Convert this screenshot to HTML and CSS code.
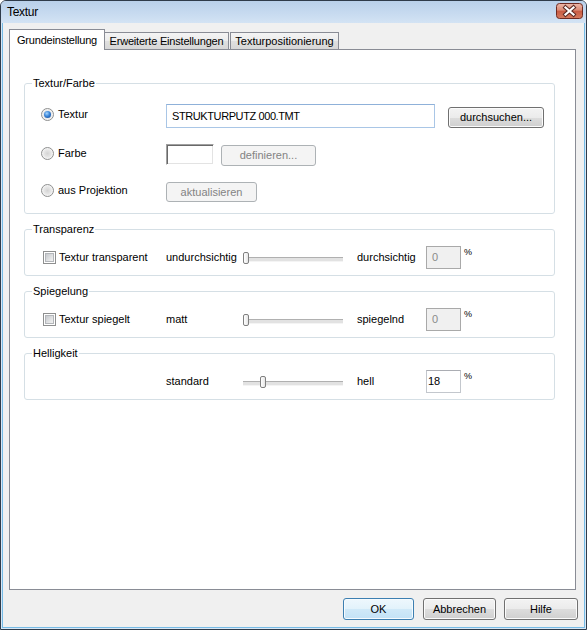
FILE: index.html
```html
<!DOCTYPE html>
<html lang="de">
<head>
<meta charset="utf-8">
<title>Textur</title>
<link rel="stylesheet" href="styles.css">
</head>
<body>
<div class="window">
  <div class="titlebar">
    <span class="title">Textur</span>
    <svg class="close" width="27" height="16" viewBox="0 0 27 16">
      <defs>
        <linearGradient id="cg" x1="0" y1="0" x2="0" y2="1">
          <stop offset="0" stop-color="#edb9ab"/>
          <stop offset="0.45" stop-color="#db8a74"/>
          <stop offset="0.5" stop-color="#c85a42"/>
          <stop offset="1" stop-color="#d67c60"/>
        </linearGradient>
      </defs>
      <rect x="0.5" y="0.5" width="26" height="15" rx="3" fill="url(#cg)" stroke="#6e2a22"/>
      <path d="M9.5 4.5 L17.5 11.5 M17.5 4.5 L9.5 11.5" stroke="#5b2a24" stroke-width="4.2" stroke-linecap="square"/>
      <path d="M9.5 4.5 L17.5 11.5 M17.5 4.5 L9.5 11.5" stroke="#ffffff" stroke-width="2.2" stroke-linecap="square"/>
    </svg>
  </div>
  <div class="client">
    <div class="tabs">
      <div class="tab active t1">Grundeinstellung</div>
      <div class="tab t2">Erweiterte Einstellungen</div>
      <div class="tab t3">Texturpositionierung</div>
    </div>
    <div class="panel">
      <fieldset class="group g1">
        <legend>Textur/Farbe</legend>
        <div class="gbody">
          <div class="row r1">
            <span class="opt"><span class="radio checked"></span>Textur</span>
            <div class="textbox">STRUKTURPUTZ 000.TMT</div>
            <div class="btn browse">durchsuchen...</div>
          </div>
          <div class="row r2">
            <span class="opt"><span class="radio"></span>Farbe</span>
            <div class="colorbox"></div>
            <div class="btn disabled define">definieren...</div>
          </div>
          <div class="row r3">
            <span class="opt"><span class="radio"></span>aus Projektion</span>
            <div class="btn disabled refresh">aktualisieren</div>
          </div>
        </div>
      </fieldset>

      <fieldset class="group">
        <legend>Transparenz</legend>
        <div class="gbody">
          <div class="srow">
            <span class="opt"><span class="check"></span>Textur transparent</span>
            <span>undurchsichtig</span>
            <div class="slider"><span class="thumb" style="margin-left:0px"></span></div>
            <span>durchsichtig</span>
            <div class="numwrap"><div class="num disabled">0</div><span class="pct">%</span></div>
          </div>
        </div>
      </fieldset>

      <fieldset class="group">
        <legend>Spiegelung</legend>
        <div class="gbody">
          <div class="srow">
            <span class="opt"><span class="check"></span>Textur spiegelt</span>
            <span>matt</span>
            <div class="slider"><span class="thumb" style="margin-left:0px"></span></div>
            <span>spiegelnd</span>
            <div class="numwrap"><div class="num disabled">0</div><span class="pct">%</span></div>
          </div>
        </div>
      </fieldset>

      <fieldset class="group">
        <legend>Helligkeit</legend>
        <div class="gbody">
          <div class="srow">
            <span class="opt"></span>
            <span>standard</span>
            <div class="slider"><span class="thumb" style="margin-left:17px"></span></div>
            <span>hell</span>
            <div class="numwrap"><div class="num">18</div><span class="pct">%</span></div>
          </div>
        </div>
      </fieldset>
    </div>
    <div class="footer">
      <div class="btn default ok">OK</div>
      <div class="btn cancel">Abbrechen</div>
      <div class="btn help">Hilfe</div>
    </div>
  </div>
</div>
</body>
</html>
```

FILE: styles.css
```css
* { box-sizing: border-box; }

body {
  margin: 0;
  font: 11px/13px "Liberation Sans", Arial, sans-serif;
  color: #000;
  background: #fff;
}

.window {
  width: 587px;
  height: 630px;
  border: 1px solid #2f3b4a;
  border-radius: 6px 6px 0 0;
  background: #d6e7f6;
  display: flex;
  flex-direction: column;
  overflow: hidden;
}

.titlebar {
  height: 22px;
  flex: none;
  display: flex;
  align-items: flex-start;
  justify-content: space-between;
  padding: 0 3px 0 6px;
  background: linear-gradient(#b9d0ea, #c8dbf0 60%, #d3e3f4);
}

.title {
  font-size: 12px;
  line-height: 22px;
  letter-spacing: -0.3px;
}

.close {
  display: block;
  margin-top: 2px;
}

.client {
  flex: 1;
  margin: 0 1px 1px;
  border: 1px solid #76bbe6;
  border-top: none;
  background: #f0f0f0;
  padding: 6px 6px 7px 6px;
  display: flex;
  flex-direction: column;
}

/* tabs */
.tabs {
  display: flex;
  align-items: flex-end;
  height: 20px;
  flex: none;
  position: relative;
  z-index: 1;
}

.tab {
  height: 17px;
  border: 1px solid #898c95;
  border-bottom: none;
  background: linear-gradient(#f4f4f4, #ececec 50%, #e0e0e0 50%, #d7d7d7);
  display: flex;
  align-items: center;
  justify-content: center;
  padding-top: 1px;
  white-space: nowrap;
}

.tab.active {
  height: 21px;
  margin-bottom: -1px;
  background: #fff;
  padding-top: 0;
  letter-spacing: -0.2px;
}

.t1 { width: 96px; }
.t2 { width: 125px; margin-left: -1px; letter-spacing: -0.2px; }
.t3 { width: 109px; margin-left: 1px; }

/* panel */
.panel {
  flex: 1;
  border: 1px solid #898c95;
  background: #fff;
  margin-right: 2px;
  padding: 27px 20px 0 14px;
  display: flex;
  flex-direction: column;
  gap: 9px;
}

.group {
  margin: 0;
  padding: 0;
  min-width: 0;
  border: 1px solid #d5dfe5;
  border-radius: 3px;
}

.group legend {
  margin-left: 7px;
  padding: 0 1px;
  line-height: 13px;
}

.gbody {
  padding: 10px 0 6px 18px;
}

.g1 .gbody {
  padding: 14px 0 11px 18px;
}

.row {
  display: flex;
  align-items: center;
}

.row + .row { margin-top: 16px; }
.r1 { height: 24px; }
.r2 { height: 22px; }
.r3 { height: 20px; }

.opt {
  width: 123px;
  flex: none;
  display: flex;
  align-items: center;
  white-space: nowrap;
}

.r1 .opt { align-self: flex-start; margin-top: 4px; }
.r2 .opt { align-self: flex-start; margin-top: 3px; }
.r3 .opt { align-self: flex-start; margin-top: 2px; }

.radio {
  width: 13px;
  height: 13px;
  margin-left: -2px;
  margin-right: 4px;
  border-radius: 50%;
  border: 1px solid #8e8f8f;
  background: radial-gradient(circle at 50% 50%, #d4d4d4 0, #e6e6e6 45%, #f8f8f8 75%, #fff 100%);
  display: flex;
  align-items: center;
  justify-content: center;
  flex: none;
}

.radio.checked::after {
  content: "";
  width: 7px;
  height: 7px;
  border-radius: 50%;
  background: radial-gradient(circle at 40% 35%, #a6d6ff 0, #3b86d8 45%, #12418f 100%);
}

.check {
  width: 13px;
  height: 13px;
  margin-right: 3px;
  border: 1px solid #8e8f8f;
  background: #fff;
  padding: 1px;
  flex: none;
  display: flex;
}

.check::after {
  content: "";
  flex: 1;
  border: 1px solid #b3b6ba;
  background: linear-gradient(135deg, #c6c9cd, #e6e7e8 70%, #f1f1f1);
}

.textbox {
  width: 269px;
  height: 24px;
  border: 1px solid #a9c6e6;
  border-top-color: #8fb1d9;
  background: #fff;
  padding-left: 5px;
  display: flex;
  align-items: center;
  white-space: pre;
  letter-spacing: -0.4px;
}

.btn {
  height: 21px;
  border: 1px solid #707070;
  border-radius: 3px;
  background: linear-gradient(#f3f3f3, #ebebeb 50%, #dddddd 50%, #cfcfcf);
  box-shadow: inset 0 0 0 1px #fbfbfb;
  display: flex;
  align-items: center;
  justify-content: center;
  white-space: nowrap;
  flex: none;
}

.btn.disabled {
  border-color: #adb2b5;
  background: #f4f4f4;
  box-shadow: none;
  color: #838383;
}

.browse { width: 96px; margin-left: 13px; align-self: flex-end; }

.colorbox {
  width: 48px;
  height: 21px;
  align-self: flex-start;
  background: #fff;
  border-top: 1px solid #a0a0a0;
  border-left: 1px solid #a0a0a0;
  border-right: 1px solid #fff;
  border-bottom: 1px solid #fff;
  box-shadow: inset 1px 1px 0 #696969, inset -1px -1px 0 #e3e3e3;
}

.define { width: 95px; margin-left: 7px; align-self: flex-end; }
.refresh { width: 91px; height: 20px; }

/* slider rows */
.srow {
  display: grid;
  grid-template-columns: 123px 77px 114px 69px auto;
  align-items: center;
  height: 23px;
  white-space: nowrap;
}

.slider {
  width: 100px;
  height: 14px;
  position: relative;
  display: flex;
  align-items: center;
}

.slider::before {
  content: "";
  position: absolute;
  left: 0;
  right: 0;
  top: 6px;
  height: 3px;
  border-top: 1px solid #b0b0b0;
  border-bottom: 1px solid #f4f4f4;
  background: #e2e2e2;
}

.thumb {
  position: relative;
  width: 6px;
  height: 12px;
  border: 1px solid #808080;
  border-radius: 2px;
  background: linear-gradient(90deg, #ffffff, #e6e6e6);
}

.numwrap {
  display: flex;
  align-items: flex-start;
}

.num {
  width: 35px;
  height: 23px;
  border: 1px solid #c3c7cd;
  border-top-color: #abadb3;
  background: #fff;
  display: flex;
  align-items: center;
  padding-left: 1px;
}

.num.disabled {
  border-color: #a9a9a9;
  background: #f0f0f0;
  color: #8a8a8a;
  padding-left: 5px;
}

.pct {
  font-size: 9px;
  line-height: 9px;
  margin-left: 3px;
  margin-top: 2px;
}

/* footer */
.footer {
  display: flex;
  justify-content: flex-end;
  margin-top: 8px;
  height: 22px;
  flex: none;
}

.footer .btn { height: 22px; }
.ok { width: 71px; }
.cancel { width: 73px; margin-left: 9px; }
.help { width: 74px; margin-left: 8px; }

.btn.default {
  border-color: #3c7fb1;
  background: linear-gradient(#eef7fd, #e2f2fb 50%, #d0e9f8 50%, #c3e2f6);
  box-shadow: inset 0 0 0 1px #f6fbfe;
}
```
